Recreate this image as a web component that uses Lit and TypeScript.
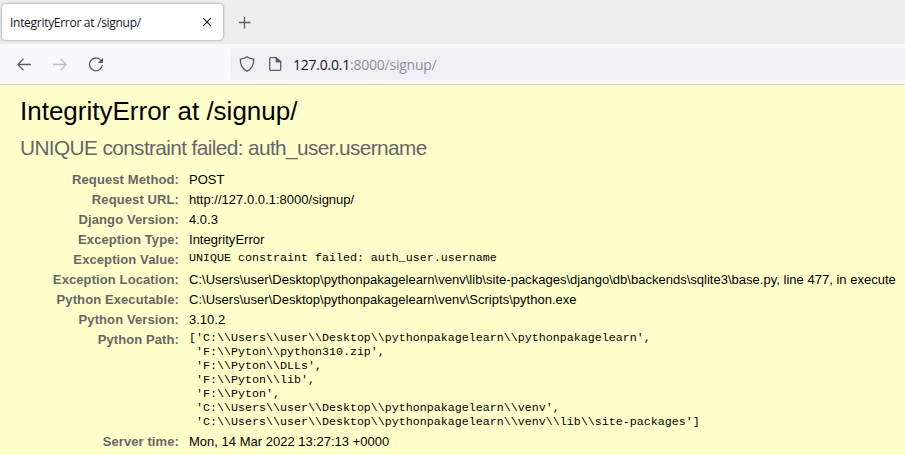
import { LitElement, html, css } from "lit";
import { customElement } from "lit/decorators.js";

const rows: { label: string; value: string; cls: string }[] = [
  { label: "Request Method:", value: "POST", cls: "txt" },
  { label: "Request URL:", value: "http://127.0.0.1:8000/signup/", cls: "txt" },
  { label: "Django Version:", value: "4.0.3", cls: "txt" },
  { label: "Exception Type:", value: "IntegrityError", cls: "txt" },
  { label: "Exception Value:", value: "UNIQUE constraint failed: auth_user.username", cls: "code" },
  {
    label: "Exception Location:",
    value: "C:\\Users\\user\\Desktop\\pythonpakagelearn\\venv\\lib\\site-packages\\django\\db\\backends\\sqlite3\\base.py, line 477, in execute",
    cls: "txt",
  },
  { label: "Python Executable:", value: "C:\\Users\\user\\Desktop\\pythonpakagelearn\\venv\\Scripts\\python.exe", cls: "txt" },
  { label: "Python Version:", value: "3.10.2", cls: "txt" },
  {
    label: "Python Path:",
    value: [
      "['C:\\\\Users\\\\user\\\\Desktop\\\\pythonpakagelearn\\\\pythonpakagelearn',",
      " 'F:\\\\Pyton\\\\python310.zip',",
      " 'F:\\\\Pyton\\\\DLLs',",
      " 'F:\\\\Pyton\\\\lib',",
      " 'F:\\\\Pyton',",
      " 'C:\\\\Users\\\\user\\\\Desktop\\\\pythonpakagelearn\\\\venv',",
      " 'C:\\\\Users\\\\user\\\\Desktop\\\\pythonpakagelearn\\\\venv\\\\lib\\\\site-packages']",
    ].join("\n"),
    cls: "code",
  },
  { label: "Server time:", value: "Mon, 14 Mar 2022 13:27:13 +0000", cls: "txt" },
];

@customElement("browser-chrome")
export class BrowserChrome extends LitElement {
  static styles = css`
    :host { display: block; font-family: "Open Sans", "Noto Sans", sans-serif; }
    svg { display: block; flex: none; fill: none; stroke: #5b5b66; stroke-width: 1.3; }
    .tabs { display: flex; height: 44px; background: #eeeeee; box-sizing: border-box; padding: 4px 0 4px 2px; }
    .tab {
      display: flex; align-items: center; justify-content: space-between; box-sizing: border-box;
      width: 221px; height: 36px; padding: 0 10px 0 8px; border-radius: 4px; background: #fff;
      box-shadow: 0 0 3px rgba(0, 0, 0, 0.45);
    }
    .title { padding-top: 1px; font-size: 12px; letter-spacing: -0.29px; color: #15141a; white-space: pre; }
    .close { stroke: #15141a; stroke-width: 1.1; }
    .plus { margin: 12px 0 0 15px; }
    .bar { display: flex; align-items: center; height: 41px; box-sizing: border-box; background: #f9f9fb; border-bottom: 1px solid #ccccd0; padding-left: 16px; }
    .nav { display: flex; gap: 20px; width: 215px; }
    .dim { stroke: #bdbdc2; }
    .url { display: flex; align-items: center; flex: 1; height: 32px; background: #f0f0f4; border-radius: 4px 0 0 4px; padding-left: 8px; }
    .page { margin-left: 12px; }
    .solid { fill: #5b5b66; stroke: none; }
    .addr { margin-left: 10px; padding-top: 1px; font-size: 14px; letter-spacing: -0.23px; color: #15141a; white-space: pre; }
    .rest { color: #8f8f96; }
  `;
  render() {
    return html`
      <div class="tabs">
        <div class="tab">
          <span class="title">IntegrityError at /signup/</span>
          <svg class="close" width="12" height="12" viewBox="0 0 12 12"><path d="M2.2 2.2l7.6 7.6M9.8 2.2L2.2 9.8" /></svg>
        </div>
        <svg class="plus" width="14" height="14" viewBox="0 0 14 14"><path d="M1 6.5h11.5M6.5 1v11.5" /></svg>
      </div>
      <div class="bar">
        <div class="nav">
          <svg width="16" height="16" viewBox="0 0 16 16"><path d="M15 8.5H1.8M7.5 2.8L1.8 8.5l5.7 5.7" /></svg>
          <svg class="dim" width="16" height="16" viewBox="0 0 16 16"><path d="M1 8.5h13.2M8.5 2.8l5.7 5.7-5.7 5.7" /></svg>
          <svg width="16" height="16" viewBox="0 0 16 16">
            <path d="M12.6 4A6.4 6.4 0 1 0 14.3 9" />
            <path class="solid" d="M15 1.8v4.7a.5.5 0 0 1-.5.5H9.8z" />
          </svg>
        </div>
        <div class="url">
          <svg width="16" height="16" viewBox="0 0 16 16"><path d="M8 .8C6.3 2 3.8 2.9 1.3 3.1c-.2 6 2 10 6.7 12.1 4.7-2.1 6.9-6.1 6.7-12.1C12.2 2.9 9.7 2 8 .8z" /></svg>
          <svg class="page" width="16" height="16" viewBox="0 0 16 16">
            <path d="M9 1.7H3.7a1 1 0 0 0-1 1v10.6a1 1 0 0 0 1 1h9a1 1 0 0 0 1-1V5.5z" />
            <path class="solid" d="M8.7 1.2h.8l4.8 4.6v.6H9.4a.7.7 0 0 1-.7-.7z" />
          </svg>
          <span class="addr">127.0.0.1<span class="rest">:8000/signup/</span></span>
        </div>
      </div>
    `;
  }
}

@customElement("app-root")
export class AppRoot extends LitElement {
  static styles = css`
    :host { display: block; height: 455px; overflow: hidden; background: #ffffcc; font-family: "Liberation Sans", Arial, sans-serif; }
    main { padding: 10px 0 0 20px; }
    h1, h2, pre { margin: 0; font-weight: normal; white-space: pre; }
    h1 { height: 38px; line-height: 32px; font-size: 26px; color: #000; }
    h2 { height: 37px; line-height: 30px; font-size: 20.8px; letter-spacing: -0.61px; color: #666; }
    .meta { display: grid; grid-template-columns: 159px auto; column-gap: 10px; font-size: 13px; line-height: 20px; }
    .label { font-weight: bold; text-align: right; letter-spacing: 0.1px; color: #666; }
    .txt { color: #000; white-space: pre; letter-spacing: 0.015px; font-family: "Liberation Sans", Arial, sans-serif; }
    .code { padding: 1px 0 3px; font: 11.665px/14px "Liberation Mono", "Courier New", monospace; color: #000; }
  `;
  render() {
    return html`
      <browser-chrome></browser-chrome>
      <main>
        <h1>IntegrityError at /signup/</h1>
        <h2>UNIQUE constraint failed: auth_user.username</h2>
        <div class="meta">
          ${rows.map((r) => html`<div class="label">${r.label}</div><pre class=${r.cls}>${r.value}</pre>`)}
        </div>
      </main>
    `;
  }
}
